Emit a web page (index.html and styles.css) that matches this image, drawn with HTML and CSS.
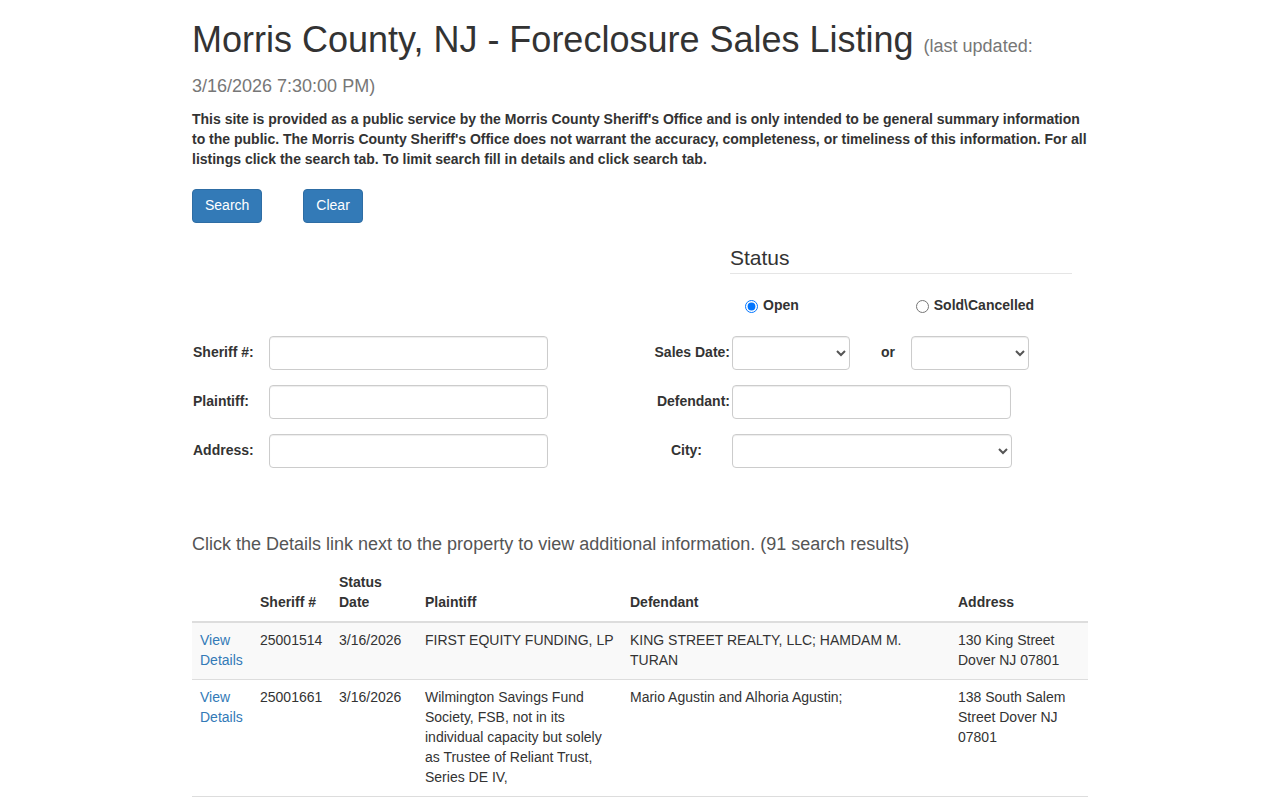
FILE: index.html
```html
<!DOCTYPE html>
<html lang="en">
<head>
<meta charset="utf-8">
<title>Morris County, NJ - Foreclosure Sales Listing</title>
<link rel="stylesheet" href="styles.css">
</head>
<body>
<div class="container">
  <h1 class="title">Morris County, NJ - Foreclosure Sales Listing <small>(last updated: 3/16/2026 7:30:00 PM)</small></h1>
  <p class="intro">This site is provided as a public service by the Morris County Sheriff's Office and is only intended to be general summary information to the public. The Morris County Sheriff's Office does not warrant the accuracy, completeness, or timeliness of this information. For all listings click the search tab. To limit search fill in details and click search tab.</p>

  <div class="actions">
    <button class="btn btn-search" type="button">Search</button>
    <button class="btn btn-clear" type="button">Clear</button>
  </div>

  <fieldset class="status">
    <legend>Status</legend>
    <div class="radios">
      <label class="radio-opt"><input type="radio" name="status" checked> Open</label>
      <label class="radio-opt radio-sold"><input type="radio" name="status"> Sold\Cancelled</label>
    </div>
  </fieldset>

  <div class="search-grid">
    <div class="field-left">
      <label class="lbl-left">Sheriff #:</label>
      <input class="form-control text-in" type="text">
    </div>
    <div class="field-right">
      <label class="lbl-right">Sales Date:</label>
      <select class="form-control sel-date"><option></option></select>
      <span class="or">or</span>
      <select class="form-control sel-date"><option></option></select>
    </div>
    <div class="field-left">
      <label class="lbl-left">Plaintiff:</label>
      <input class="form-control text-in" type="text">
    </div>
    <div class="field-right">
      <label class="lbl-right">Defendant:</label>
      <input class="form-control text-in" type="text">
    </div>
    <div class="field-left">
      <label class="lbl-left">Address:</label>
      <input class="form-control text-in" type="text">
    </div>
    <div class="field-right">
      <label class="lbl-right lbl-city">City:</label>
      <select class="form-control sel-city"><option></option></select>
    </div>
  </div>

  <h4 class="results-note">Click the Details link next to the property to view additional information. (91 search results)</h4>

  <table class="results">
    <colgroup>
      <col class="c1"><col class="c2"><col class="c3"><col class="c4"><col class="c5"><col class="c6">
    </colgroup>
    <thead>
      <tr>
        <th></th>
        <th>Sheriff #</th>
        <th>Status Date</th>
        <th>Plaintiff</th>
        <th>Defendant</th>
        <th>Address</th>
      </tr>
    </thead>
    <tbody>
      <tr class="odd">
        <td><a href="#">View Details</a></td>
        <td>25001514</td>
        <td>3/16/2026</td>
        <td>FIRST EQUITY FUNDING, LP</td>
        <td>KING STREET REALTY, LLC; HAMDAM M. TURAN</td>
        <td>130 King Street Dover NJ 07801</td>
      </tr>
      <tr>
        <td><a href="#">View Details</a></td>
        <td>25001661</td>
        <td>3/16/2026</td>
        <td>Wilmington Savings Fund Society, FSB, not in its individual capacity but solely as Trustee of Reliant Trust, Series DE IV,</td>
        <td>Mario Agustin and Alhoria Agustin;</td>
        <td>138 South Salem Street Dover NJ 07801</td>
      </tr>
    </tbody>
  </table>
</div>
</body>
</html>
```

FILE: styles.css
```css
* { box-sizing: border-box; }
html, body { margin: 0; padding: 0; }
body {
  font-family: "Liberation Sans", Arial, Helvetica, sans-serif;
  font-size: 14px;
  line-height: 1.42857;
  color: #333;
  background: #fff;
}
.container {
  width: 896px;
  margin: 0 auto;
  padding-bottom: 40px;
}
.title {
  font-size: 36px;
  font-weight: 500;
  line-height: 1.1;
  margin: 20px 0 11px;
  color: #333;
}
.title small {
  font-size: 18px;
  font-weight: 400;
  color: #777;
}
.intro {
  font-weight: bold;
  margin: 0 0 10px;
  color: #333;
}
.actions {
  display: flex;
  gap: 41px;
  margin-top: 19px;
}
.btn {
  font-family: inherit;
  font-size: 14px;
  line-height: 1.42857;
  padding: 6px 12px;
  border: 1px solid #2e6da4;
  border-radius: 4px;
  background: #337ab7;
  color: #fff;
  cursor: pointer;
}
.status {
  margin: 20px 0 0 538px;
  padding: 0;
  border: 0;
  width: 342px;
  min-width: 0;
}
.status legend {
  display: block;
  width: 100%;
  padding: 0;
  margin-bottom: 22px;
  font-size: 21px;
  line-height: 1.42857;
  color: #333;
  border-bottom: 1px solid #e5e5e5;
}
.radios {
  display: flex;
  padding-left: 10px;
  height: 20px;
  align-items: center;
}
.radio-opt {
  font-weight: bold;
  display: flex;
  align-items: center;
  gap: 2px;
}
.radio-opt input {
  margin: 0 3px 0 5px;
  width: 13px;
  height: 13px;
}
.radio-sold {
  margin-left: 112px;
}
.search-grid {
  display: grid;
  grid-template-columns: 458px 438px;
  row-gap: 15px;
  margin-top: 20px;
}
.field-left, .field-right {
  display: flex;
  align-items: center;
  height: 34px;
}
.lbl-left {
  font-weight: bold;
  width: 77px;
  padding-left: 1px;
}
.lbl-right {
  font-weight: bold;
  width: 82px;
  text-align: right;
  padding-right: 2px;
}
.lbl-city {
  padding-right: 30px;
}
.form-control {
  height: 34px;
  padding: 6px 12px;
  font-family: inherit;
  font-size: 14px;
  color: #555;
  background: #fff;
  border: 1px solid #ccc;
  border-radius: 4px;
  box-shadow: inset 0 1px 1px rgba(0,0,0,.075);
}
.text-in { width: 279px; }
.sel-date { width: 118px; padding: 6px 8px; }
.sel-city { width: 280px; padding: 6px 8px; }
.or {
  font-weight: bold;
  margin: 0 16px 0 31px;
}
.results-note {
  font-size: 18px;
  font-weight: 400;
  line-height: 1.1;
  color: #555;
  margin: 67px 0 10px;
}
.results {
  width: 100%;
  table-layout: fixed;
  border-collapse: collapse;
  border-spacing: 0;
  border-bottom: 1px solid #ddd;
}
.c1 { width: 60px; }
.c2 { width: 79px; }
.c3 { width: 86px; }
.c4 { width: 205px; }
.c5 { width: 328px; }
.c6 { width: 138px; }
.results th, .results td {
  padding: 8px;
  text-align: left;
  line-height: 1.42857;
}
.results th {
  vertical-align: bottom;
  border-bottom: 2px solid #ddd;
  font-weight: bold;
}
.results td {
  vertical-align: top;
  border-top: 1px solid #ddd;
}
.results tbody tr:first-child td { border-top: 0; }
.results tr.odd td { background: #f9f9f9; }
.results a {
  color: #337ab7;
  text-decoration: none;
}
```
